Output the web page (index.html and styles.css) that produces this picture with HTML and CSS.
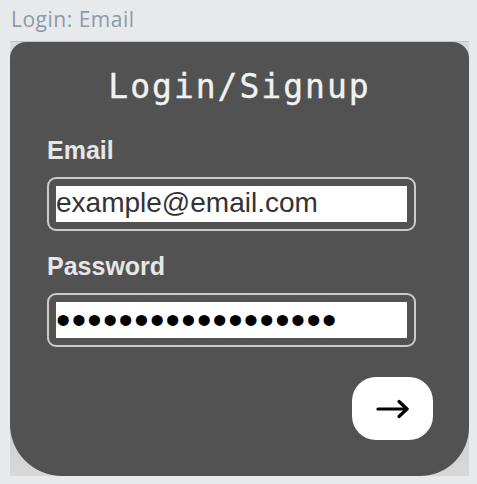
FILE: index.html
```html
<!DOCTYPE html>
<html lang="en">
<head>
<meta charset="utf-8">
<title>Login: Email</title>
<link rel="stylesheet" href="styles.css">
</head>
<body>
  <div class="caption">Login: Email</div>
  <div class="frame">
    <div class="card">
      <h1 class="title">Login/Signup</h1>
      <div class="label">Email</div>
      <div class="field">
        <div class="field-inner">example@email.com</div>
      </div>
      <div class="label label-second">Password</div>
      <div class="field">
        <div class="field-inner dots">••••••••••••••••••</div>
      </div>
      <div class="actions">
        <button class="go" type="button" aria-label="Continue">
          <svg width="36" height="24" viewBox="0 0 36 24" aria-hidden="true">
            <path d="M3 12 H32" stroke="#000" stroke-width="3.2" stroke-linecap="round" fill="none"/>
            <path d="M24 4.5 L32 12 L24 19.5" stroke="#000" stroke-width="3.2" stroke-linecap="round" stroke-linejoin="round" fill="none"/>
          </svg>
        </button>
      </div>
    </div>
  </div>
</body>
</html>
```
FILE: styles.css
```css
html, body {
  margin: 0;
  padding: 0;
  background: #e8e9eb;
}

body {
  width: 477px;
  height: 484px;
  overflow: hidden;
}

.caption {
  padding: 5px 11px 0;
  height: 28px;
  font-family: "Open Sans", "Liberation Sans", sans-serif;
  font-size: 21px;
  line-height: 28px;
  color: #8a9bac;
  letter-spacing: 0.5px;
}

.frame {
  margin: 8px 0 0 10px;
  width: 459px;
  height: 435px;
  background: linear-gradient(to bottom, #dadada, #cdcdcd 85%, #d8d8d8);
  border-top: 1px solid #c4c4c4;
  box-sizing: border-box;
}

.card {
  box-sizing: border-box;
  height: 100%;
  background: #525252;
  border-radius: 16px 16px 49px 52px;
  padding: 25px 0 0 37px;
  display: flex;
  flex-direction: column;
}

.title {
  margin: 0 0 29px -37px;
  font-family: "DejaVu Sans Mono", "Liberation Mono", monospace;
  font-weight: normal;
  font-size: 33px;
  line-height: 40px;
  height: 40px;
  letter-spacing: 2px;
  color: #f1f1f1;
  text-align: center;
  -webkit-text-stroke: 0.4px #f1f1f1;
}

.label {
  font-family: "Liberation Sans", Arial, sans-serif;
  font-weight: bold;
  font-size: 25px;
  line-height: 28px;
  color: #e6e6e6;
  margin-bottom: 13px;
}

.label-second {
  margin-top: 21px;
}

.field {
  box-sizing: border-box;
  width: 369px;
  height: 54px;
  border: 2px solid #cbcbcb;
  border-radius: 9px;
  padding: 7px;
}

.field-inner {
  height: 36px;
  background: #ffffff;
  font-family: "Liberation Sans", Arial, sans-serif;
  font-size: 28px;
  line-height: 34px;
  color: #333333;
  white-space: nowrap;
  overflow: hidden;
}

.dots {
  display: flex;
  align-items: center;
  font-size: 41px;
  line-height: 36px;
  color: #000;
  letter-spacing: 1.3px;
  overflow: visible;
}

.actions {
  display: flex;
  justify-content: flex-end;
  padding-right: 36px;
  margin-top: 30px;
}

.go {
  width: 81px;
  height: 63px;
  border: 0;
  border-radius: 24px;
  background: #ffffff;
  display: flex;
  align-items: center;
  justify-content: center;
  padding: 0;
  cursor: pointer;
}

.go svg {
  display: block;
}
```
